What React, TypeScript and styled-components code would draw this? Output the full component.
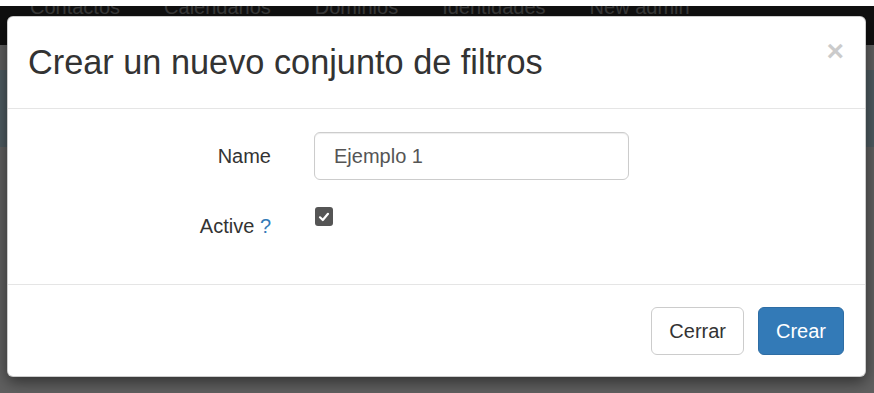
import React from 'react';
import styled, { createGlobalStyle } from 'styled-components';

const GlobalStyle = createGlobalStyle`
  html, body {
    margin: 0;
    padding: 0;
    background: #fff;
    font-family: "Liberation Sans", Arial, sans-serif;
    color: #333;
  }
`;

const Screen = styled.div`
  position: relative;
  margin-top: 6px;
  height: 387px;
  overflow: hidden;
  background: #f0f0f0;
`;

const NavBar = styled.div`
  height: 39px;
  overflow: hidden;
  background: #2a2a2a;
`;

const NavLinks = styled.ul`
  display: flex;
  gap: 44px;
  margin: -9px 0 0;
  padding: 0 0 0 30px;
  list-style: none;

  li {
    font-size: 20px;
    line-height: 20px;
    color: #929292;
  }
`;

const Spacer = styled.div<{ h: number }>`
  height: ${p => p.h}px;
`;

const InfoBand = styled.div`
  height: 77px;
  background: #c4e3f3;
`;

const Backdrop = styled.div`
  position: absolute;
  inset: 0;
  background: rgba(0, 0, 0, 0.6);
`;

const Dialog = styled.div`
  position: absolute;
  left: 7px;
  top: 10px;
  width: 859px;
  box-sizing: border-box;
  background: #fff;
  border: 1px solid rgba(0, 0, 0, 0.2);
  border-radius: 6px;
  box-shadow: 0 5px 15px rgba(0, 0, 0, 0.5);
`;

const Header = styled.div`
  display: flex;
  justify-content: space-between;
  align-items: flex-start;
  padding: 21px 21px 21px 20px;
  border-bottom: 1px solid #e5e5e5;
`;

const Title = styled.h3`
  margin: 0;
  font-size: 34.3px;
  font-weight: 400;
  line-height: 49px;
  color: #333;
`;

const Close = styled.button`
  margin-top: -2px;
  padding: 0;
  border: 0;
  background: transparent;
  font-family: inherit;
  font-size: 30px;
  font-weight: 700;
  line-height: 30px;
  color: #000;
  opacity: 0.2;
  cursor: pointer;
`;

const Body = styled.div`
  padding: 23px 21px 22px;
`;

const FormRow = styled.div`
  display: grid;
  grid-template-columns: 242px 315px;
  column-gap: 43px;
  margin-bottom: 22px;
`;

const Label = styled.label`
  padding-top: 10px;
  text-align: right;
  font-size: 20px;
  line-height: 28px;
  color: #333;

  span {
    color: #337ab7;
  }
`;

const Input = styled.input`
  box-sizing: border-box;
  width: 315px;
  height: 48px;
  padding: 0 19px;
  border: 1px solid #ccc;
  border-radius: 6px;
  box-shadow: inset 0 1px 1px rgba(0, 0, 0, 0.075);
  font-family: inherit;
  font-size: 20px;
  color: #555;
  outline: none;
`;

const CheckCell = styled.div`
  padding: 5px 0 0 1px;
`;

const CheckBox = styled.span`
  display: flex;
  align-items: center;
  justify-content: center;
  width: 18px;
  height: 19px;
  border-radius: 3px;
  background: #555;
`;

const Footer = styled.div`
  display: flex;
  justify-content: flex-end;
  gap: 14px;
  padding: 22px 21px 21px;
  border-top: 1px solid #e5e5e5;
`;

const Button = styled.button<{ primary?: boolean }>`
  height: 48px;
  padding: 0 17px;
  border-radius: 6px;
  border: 1px solid ${p => (p.primary ? '#2e6da4' : '#ccc')};
  background: ${p => (p.primary ? '#337ab7' : '#fff')};
  color: ${p => (p.primary ? '#fff' : '#333')};
  font-family: inherit;
  font-size: 20px;
  cursor: pointer;
`;

const navItems = ['Contactos', 'Calendarios', 'Dominios', 'Identidades', 'New admin'];

export default function App() {
  return (
    <>
      <GlobalStyle />
      <Screen>
        <NavBar>
          <NavLinks>
            {navItems.map(item => (
              <li key={item}>{item}</li>
            ))}
          </NavLinks>
        </NavBar>
        <Spacer h={25} />
        <InfoBand />
        <Backdrop />
        <Dialog>
          <Header>
            <Title>Crear un nuevo conjunto de filtros</Title>
            <Close>×</Close>
          </Header>
          <Body>
            <FormRow>
              <Label>Name</Label>
              <Input defaultValue='Ejemplo 1' />
            </FormRow>
            <FormRow>
              <Label>
                Active <span>?</span>
              </Label>
              <CheckCell>
                <CheckBox>
                  <svg width='12' height='12' viewBox='0 0 12 12'>
                    <path d='M2 6.3 L4.8 9 L10 2.8' fill='none' stroke='#fff' strokeWidth='2.2' strokeLinecap='round' strokeLinejoin='round' />
                  </svg>
                </CheckBox>
              </CheckCell>
            </FormRow>
          </Body>
          <Footer>
            <Button>Cerrar</Button>
            <Button primary>Crear</Button>
          </Footer>
        </Dialog>
      </Screen>
    </>
  );
}
